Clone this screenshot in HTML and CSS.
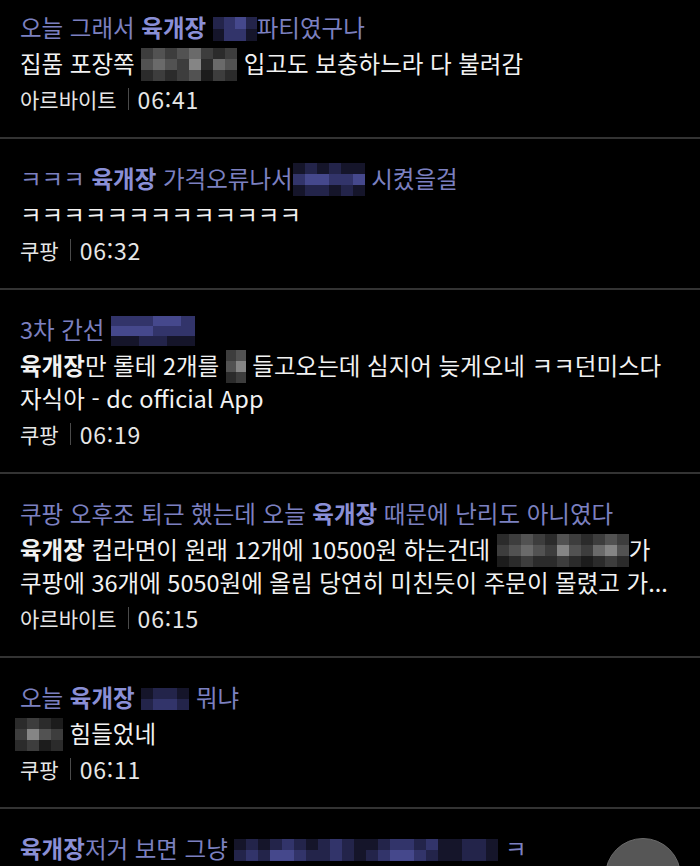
FILE: index.html
```html
<!DOCTYPE html>
<html lang="ko">
<head>
<meta charset="utf-8">
<title>검색 결과</title>
<link rel="stylesheet" href="styles.css">
</head>
<body>
<div class="list">
  <div class="item first">
    <div class="title">오늘 그래서 <b>육개장</b> <span class="mz c11"><span class="r"><i class="u2"></i><i class="u3"></i><i class="u4"></i><i class="u2"></i></span><span class="r"><i class="u1"></i><i class="u3"></i><i class="u3"></i><i class="u1"></i></span></span>파티였구나</div>
    <div class="line">집품 포장쪽 <span class="mz c12 h3"><span class="r"><i class="k3"></i><i class="k4"></i><i class="k3"></i><i class="k4"></i><i class="k5"></i><i class="k3"></i><i class="k2"></i><i class="k3"></i></span><span class="r"><i class="k4"></i><i class="k5"></i><i class="k4"></i><i class="k3"></i><i class="k6"></i><i class="k2"></i><i class="k5"></i><i class="k4"></i></span><span class="r"><i class="k2"></i><i class="k3"></i><i class="k2"></i><i class="k3"></i><i class="k4"></i><i class="k1"></i><i class="k3"></i><i class="k2"></i></span></span> 입고도 보충하느라 다 불려감</div>
    <div class="meta">아르바이트<span class="sep"></span><span class="time">06:41</span></div>
  </div>

  <div class="item">
    <div class="title">ㅋㅋㅋ <b>육개장</b> 가격오류나서<span class="mz c12 h3"><span class="r"><i class="u1"></i><i class="u2"></i><i class="u1"></i><i class="u2"></i><i class="u1"></i><i class="u1"></i></span><span class="r"><i class="u3"></i><i class="u4"></i><i class="u4"></i><i class="u3"></i><i class="u3"></i><i class="u4"></i></span><span class="r"><i class="u1"></i><i class="u2"></i><i class="u2"></i><i class="u1"></i><i class="u2"></i><i class="u1"></i></span></span> 시켰을걸</div>
    <div class="line">ㅋㅋㅋㅋㅋㅋㅋㅋㅋㅋㅋㅋㅋ</div>
    <div class="meta">쿠팡<span class="sep"></span><span class="time">06:32</span></div>
  </div>

  <div class="item">
    <div class="title">3차 간선 <span class="mz c14 h3"><span class="r"><i class="u3"></i><i class="u3"></i><i class="u3"></i><i class="u4"></i><i class="u4"></i><i class="u3"></i></span><span class="r"><i class="u4"></i><i class="u4"></i><i class="u4"></i><i class="u3"></i><i class="u3"></i><i class="u3"></i></span><span class="r"><i class="u1"></i><i class="u1"></i><i class="u2"></i><i class="u2"></i><i class="u1"></i><i class="u1"></i></span></span></div>
    <div class="line"><b>육개장</b>만 롤테 2개를 <span class="mz c10 h3"><span class="r"><i class="k3"></i><i class="k4"></i></span><span class="r"><i class="k4"></i><i class="k6"></i></span><span class="r"><i class="k2"></i><i class="k3"></i></span></span> 들고오는데 심지어 늦게오네 ㅋㅋ던미스다</div>
    <div class="line">자식아 - dc official App</div>
    <div class="meta">쿠팡<span class="sep"></span><span class="time">06:19</span></div>
  </div>

  <div class="item">
    <div class="title">쿠팡 오후조 퇴근 했는데 오늘 <b>육개장</b> 때문에 난리도 아니였다</div>
    <div class="line"><b>육개장</b> 컵라면이 원래 12개에 10500원 하는건데 <span class="mz c12 h3"><span class="r"><i class="k2"></i><i class="k3"></i><i class="k4"></i><i class="k3"></i><i class="k2"></i><i class="k4"></i><i class="k3"></i><i class="k2"></i><i class="k3"></i><i class="k4"></i><i class="k3"></i></span><span class="r"><i class="k3"></i><i class="k4"></i><i class="k5"></i><i class="k4"></i><i class="k3"></i><i class="k6"></i><i class="k4"></i><i class="k3"></i><i class="k5"></i><i class="k6"></i><i class="k4"></i></span><span class="r"><i class="k1"></i><i class="k2"></i><i class="k3"></i><i class="k2"></i><i class="k2"></i><i class="k3"></i><i class="k2"></i><i class="k1"></i><i class="k2"></i><i class="k3"></i><i class="k2"></i></span></span>가</div>
    <div class="line">쿠팡에 36개에 5050원에 올림 당연히 미친듯이 주문이 몰렸고 가...</div>
    <div class="meta">아르바이트<span class="sep"></span><span class="time">06:15</span></div>
  </div>

  <div class="item">
    <div class="title">오늘 <b>육개장</b> <span class="mz c12"><span class="r"><i class="u1"></i><i class="u2"></i><i class="u2"></i><i class="u1"></i></span><span class="r"><i class="u2"></i><i class="u3"></i><i class="u3"></i><i class="u2"></i></span></span> 뭐냐</div>
    <div class="line"><span class="mz c12 h3 lead"><span class="r"><i class="k2"></i><i class="k3"></i><i class="k2"></i><i class="k1"></i></span><span class="r"><i class="k3"></i><i class="k6"></i><i class="k4"></i><i class="k3"></i></span><span class="r"><i class="k2"></i><i class="k3"></i><i class="k1"></i><i class="k2"></i></span></span> 힘들었네</div>
    <div class="meta">쿠팡<span class="sep"></span><span class="time">06:11</span></div>
  </div>

  <div class="item">
    <div class="title"><b>육개장</b>저거 보면 그냥 <span class="mz c12"><span class="r"><i class="u1"></i><i class="u2"></i><i class="u1"></i><i class="u2"></i><i class="u3"></i><i class="u2"></i><i class="u1"></i><i class="u2"></i><i class="u3"></i><i class="u2"></i><i class="u1"></i><i class="u1"></i><i class="u2"></i><i class="u3"></i><i class="u3"></i><i class="u2"></i><i class="u3"></i><i class="u1"></i><i class="u1"></i><i class="u2"></i><i class="u2"></i><i class="u1"></i></span><span class="r"><i class="u2"></i><i class="u3"></i><i class="u2"></i><i class="u4"></i><i class="u4"></i><i class="u3"></i><i class="u2"></i><i class="u2"></i><i class="u3"></i><i class="u2"></i><i class="u1"></i><i class="u2"></i><i class="u3"></i><i class="u4"></i><i class="u4"></i><i class="u3"></i><i class="u2"></i><i class="u1"></i><i class="u1"></i><i class="u2"></i><i class="u2"></i><i class="u1"></i></span></span> ㅋ</div>
  </div>
</div>
<div class="fab"></div>
</body>
</html>
```

FILE: styles.css
```css
html, body {
  margin: 0;
  padding: 0;
  background: #000;
  height: 866px;
  overflow: hidden;
}
body {
  font-family: "Noto Sans CJK KR", "Noto Sans", sans-serif;
  font-size: 23.5px;
  color: #f2f2f2;
  position: relative;
}
.list {
  display: flex;
  flex-direction: column;
}
.item {
  padding: 21px 20px 20px;
  border-bottom: 2px solid #333;
  line-height: 36px;
}
.item.first {
  padding-top: 9px;
  padding-bottom: 20px;
}
.title, .line, .meta {
  white-space: nowrap;
  height: 36px;
}
.line + .line {
  margin-top: -3px;
}
.title {
  color: #7c80c0;
}
.title b {
  color: #8a8fd6;
  font-weight: 700;
}
.line b {
  font-weight: 700;
}
.meta {
  display: flex;
  align-items: center;
  font-size: 21px;
  color: #e6e6e6;
}
.time {
  font-size: 23px;
  letter-spacing: 0.8px;
}
.sep {
  display: inline-block;
  width: 1px;
  height: 22px;
  background: #4a4a4a;
  margin: 0 9px 0 11px;
}
.mz {
  display: inline-flex;
  flex-direction: column;
  vertical-align: middle;
  position: relative;
  top: -2px;
}
.mz.lead {
  margin-left: -5px;
}
.mz .r {
  display: flex;
}
.mz i {
  display: block;
  width: 11px;
  height: 11px;
}
.mz.c10 i { width: 10px; }
.mz.c11 i { width: 11px; height: 12px; }
.mz.c12 i { width: 12px; }
.mz.c14 i { width: 14px; height: 10px; }
.mz.h3 i { height: 11px; }
.mz.c14.h3 i { height: 10px; }
.k1 { background: #1c1c1c; }
.k2 { background: #2b2b2b; }
.k3 { background: #3d3d3d; }
.k4 { background: #525252; }
.k5 { background: #6a6a6a; }
.k6 { background: #858585; }
.u1 { background: #15152a; }
.u2 { background: #23244a; }
.u3 { background: #32346a; }
.u4 { background: #45488c; }
.u5 { background: #5a5ea8; }
.fab {
  position: absolute;
  left: 605px;
  top: 838px;
  width: 74px;
  height: 74px;
  border-radius: 50%;
  background: #565656;
  border: 1px solid #6a6a6a;
}
```
